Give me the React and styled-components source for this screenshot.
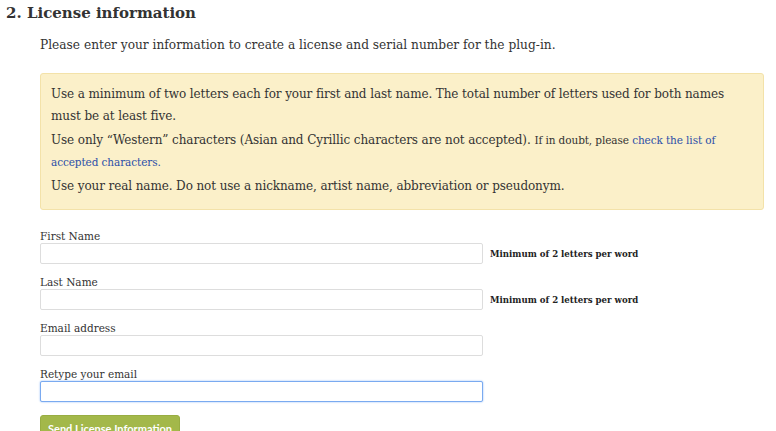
import React from "react";
import styled, { createGlobalStyle } from "styled-components";

const Global = createGlobalStyle`
  body { margin: 0; background: #fff; font-family: "DejaVu Serif", "Liberation Serif", serif; color: #333; }
`;

const Page = styled.div`
  padding: 3px 6px 0 6px;
`;

const Title = styled.h2`
  margin: 0;
  font-size: 15px;
  font-weight: bold;
  color: #333;
  line-height: 20px;
`;

const Body = styled.div`
  padding-left: 34px;
  width: 724px;
`;

const Intro = styled.p`
  margin: 12px 0 0;
  font-size: 12.2px;
  line-height: 20px;
`;

const Notice = styled.div`
  margin-top: 18px;
  background: #fbf0c9;
  border: 1px solid #f3e2a9;
  border-radius: 3px;
  padding: 9px 10px 10px;
  font-size: 12px;
  line-height: 22px;
  letter-spacing: -0.1px;
  p { margin: 0 0 2px; }
  small { font-size: 10.5px; }
  a { color: #2b4fa8; text-decoration: none; font-size: 10.5px; }
`;

const Form = styled.form`
  margin-top: 20px;
  display: flex;
  flex-direction: column;
  gap: 12px;
`;

const Field = styled.div`
  display: flex;
  flex-direction: column;
`;

const Label = styled.label`
  font-size: 10.5px;
  line-height: 13px;
`;

const Row = styled.div`
  display: flex;
  align-items: flex-end;
  gap: 7px;
`;

const Input = styled.input`
  box-sizing: border-box;
  width: 443px;
  height: 21px;
  border: 1px solid ${(p) => (p.$focus ? "#7aaaf0" : "#ddd")};
  box-shadow: ${(p) => (p.$focus ? "0 0 2px #8bb6f5" : "none")};
  border-radius: 2px;
  outline: none;
  background: #fff;
`;

const Hint = styled.span`
  font-size: 8.6px;
  font-weight: bold;
  color: #222;
  margin-bottom: 5px;
`;

const Button = styled.button`
  margin-top: 1px;
  align-self: flex-start;
  width: 140px;
  height: 27px;
  padding: 0;
  white-space: nowrap;
  background: #a3b84a;
  border: 1px solid #98ad42;
  border-radius: 3px;
  color: #fff;
  font-family: Lato, "Open Sans", sans-serif;
  font-weight: bold;
  font-size: 11px;
`;

const fields = [
  { label: "First Name", hint: true },
  { label: "Last Name", hint: true },
  { label: "Email address" },
  { label: "Retype your email", focus: true },
];

export default function App() {
  return (
    <Page>
      <Global />
      <Title>2. License information</Title>
      <Body>
        <Intro>Please enter your information to create a license and serial number for the plug-in.</Intro>
        <Notice>
          <p>Use a minimum of two letters each for your first and last name. The total number of letters used for both names must be at least five.</p>
          <p>Use only “Western” characters (Asian and Cyrillic characters are not accepted). <small>If in doubt, please </small><a href="#">check the list of accepted characters.</a></p>
          <p>Use your real name. Do not use a nickname, artist name, abbreviation or pseudonym.</p>
        </Notice>
        <Form onSubmit={(e) => e.preventDefault()}>
          {fields.map((f) => (
            <Field key={f.label}>
              <Label>{f.label}</Label>
              <Row>
                <Input $focus={f.focus} />
                {f.hint && <Hint>Minimum of 2 letters per word</Hint>}
              </Row>
            </Field>
          ))}
          <Button type="submit">Send License Information</Button>
        </Form>
      </Body>
    </Page>
  );
}
